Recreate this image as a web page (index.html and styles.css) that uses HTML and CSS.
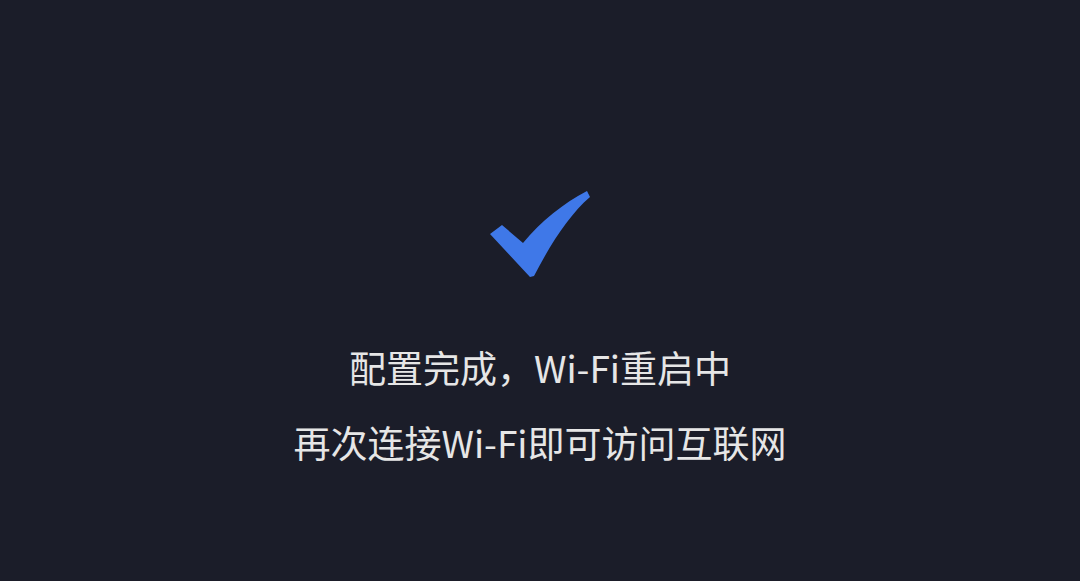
FILE: index.html
```html
<!DOCTYPE html>
<html lang="zh-CN">
<head>
<meta charset="utf-8">
<link rel="stylesheet" href="styles.css">
</head>
<body>
<main class="screen">
  <svg class="check" width="100" height="86" viewBox="489 191 100 86" aria-hidden="true">
    <path d="M489,234 L501,225 L522,243 C540,221 563,203 586,191 L589,197 C568,215 549,245 533,276 L529,277 Z" fill="#3f78e8"/>
  </svg>
  <p class="line line-1">配置完成，Wi-Fi重启中</p>
  <p class="line line-2">再次连接Wi-Fi即可访问互联网</p>
</main>
</body>
</html>
```
FILE: styles.css
```css
html, body {
  margin: 0;
  padding: 0;
  background: #1b1d29;
  height: 100%;
}
.screen {
  width: 1080px;
  height: 581px;
  box-sizing: border-box;
  padding-top: 191px;
  display: flex;
  flex-direction: column;
  align-items: center;
  font-family: "Noto Sans CJK SC", "Noto Sans", sans-serif;
  color: #e6e6e6;
}
.check {
  display: block;
}
.line {
  margin: 0;
  font-size: 37px;
  line-height: 37px;
  white-space: nowrap;
}
.line-1 {
  margin-top: 72px;
}
.line-2 {
  margin-top: 38px;
}
```
